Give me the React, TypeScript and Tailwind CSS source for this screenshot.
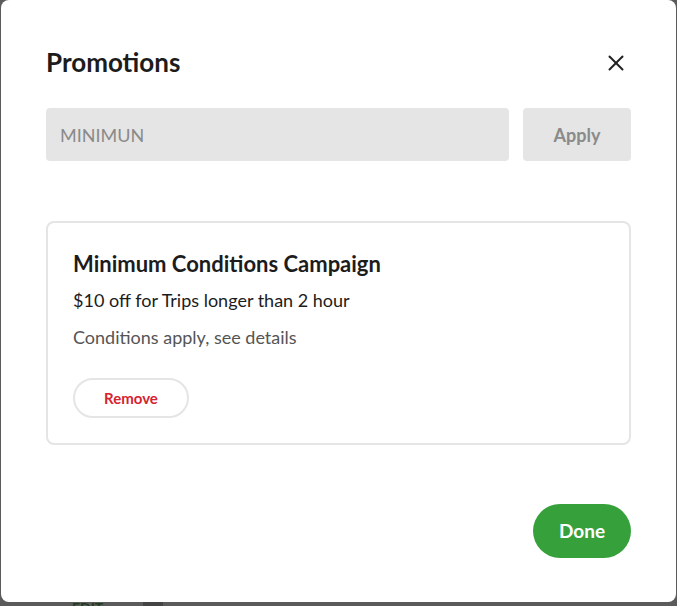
import React from 'react';
import { X } from 'lucide-react';

const App: React.FC = () => {
  return (
    <div className="relative h-[606px] w-full overflow-hidden bg-[#5b5b5b] font-['Lato',_'Noto_Sans',_sans-serif]">
      {/* page behind the backdrop */}
      <div className="absolute left-[72px] top-[597px] text-[14px] font-bold text-[#1f3a1f]">EDIT</div>
      <div className="absolute left-[143px] top-[602px] h-[6px] w-[20px] bg-[#444]"></div>

      {/* Modal */}
      <div className="relative ml-[1px] flex h-[602px] w-[675px] flex-col rounded-[8px] bg-white px-[45px]">
        <div className="mt-[46px] flex items-center justify-between">
          <h2 className="text-[26px] font-bold leading-[32px] text-[#1c1c1c]">Promotions</h2>
          <button className="mr-[2px] mt-[2px] text-[#222]">
            <X size={26} strokeWidth={1.8} />
          </button>
        </div>

        <div className="mt-[30px] flex gap-[14px]">
          <input
            className="h-[53px] flex-1 rounded-[4px] bg-[#e5e5e5] px-[14px] text-[18px] text-[#8a8a8a] placeholder:text-[#8a8a8a] outline-none"
            placeholder="MINIMUN"
          />
          <button className="h-[53px] w-[108px] rounded-[4px] bg-[#e5e5e5] pt-[1px] text-[18px] font-bold text-[#8a8a8a]">
            Apply
          </button>
        </div>

        <div className="mt-[60px] rounded-[8px] border-2 border-[#e5e5e5] px-[25px] pb-[25px] pt-[27px]">
          <h3 className="text-[22px] font-bold leading-[28px] text-[#1c1c1c]">Minimum Conditions Campaign</h3>
          <p className="mt-[10px] text-[18px] leading-[24px] text-[#1c1c1c]">$10 off for Trips longer than 2 hour</p>
          <p className="mt-[13px] text-[18px] leading-[24px] text-[#555]">Conditions apply, see details</p>
          <button className="mt-[29px] h-[40px] w-[116px] rounded-full border-2 border-[#e5e5e5] text-[15px] font-bold text-[#d5232f]">
            Remove
          </button>
        </div>

        <div className="mt-[59px] flex justify-end">
          <button className="h-[54px] w-[98px] rounded-full bg-[#36a13a] text-[19px] font-bold text-white">
            Done
          </button>
        </div>
      </div>
    </div>
  );
};

export default App;
